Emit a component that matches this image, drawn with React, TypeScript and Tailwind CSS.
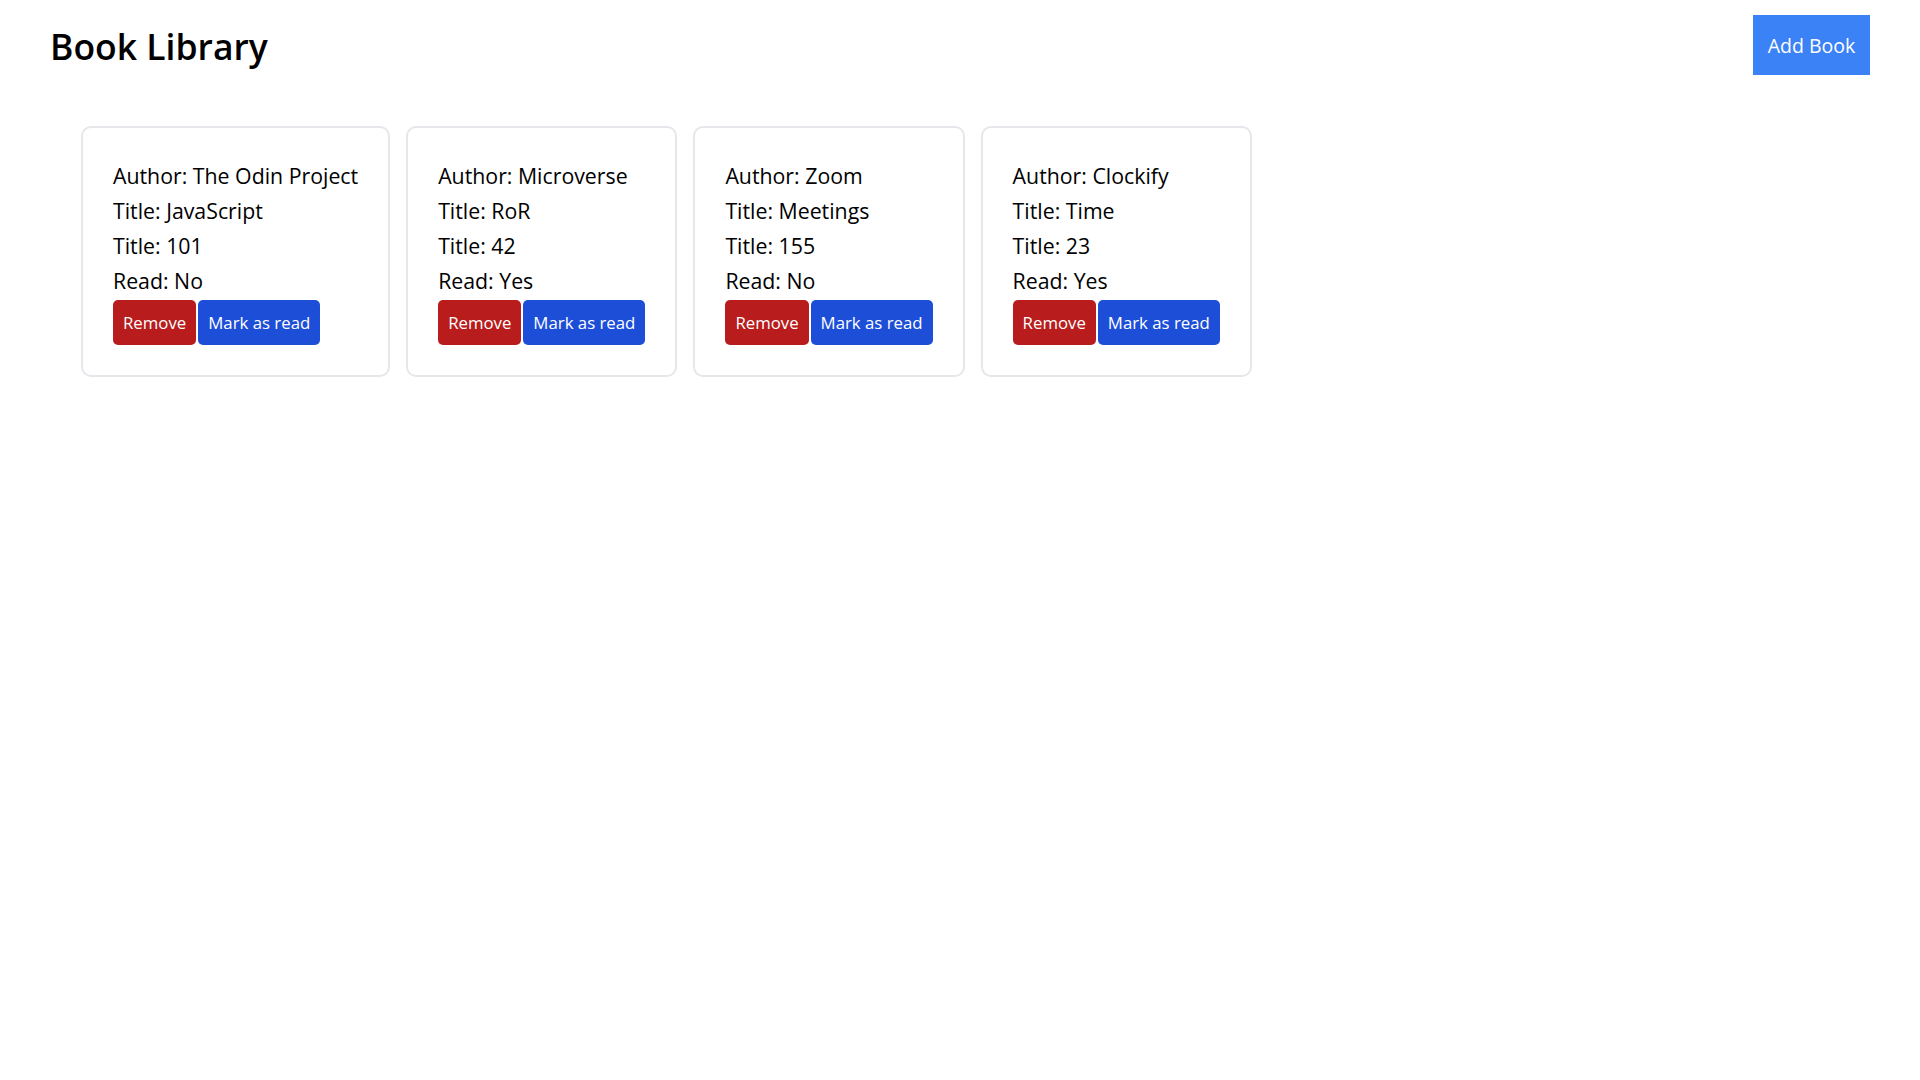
import React from "react";

type Book = { author: string; title: string; pages: string; read: boolean };

const books: Book[] = [
  { author: "The Odin Project", title: "JavaScript", pages: "101", read: false },
  { author: "Microverse", title: "RoR", pages: "42", read: true },
  { author: "Zoom", title: "Meetings", pages: "155", read: false },
  { author: "Clockify", title: "Time", pages: "23", read: true },
];

function BookCard({ book }: { book: Book }) {
  return (
    <div className="border-2 border-[#e5e7eb] rounded-[10px] px-[30px] py-[30px] bg-white">
      <p className="text-[21.3px] leading-[35px] text-black whitespace-nowrap">Author: {book.author}</p>
      <p className="text-[21.3px] leading-[35px] text-black whitespace-nowrap">Title: {book.title}</p>
      <p className="text-[21.3px] leading-[35px] text-black whitespace-nowrap">Title: {book.pages}</p>
      <p className="text-[21.3px] leading-[35px] text-black whitespace-nowrap">Read: {book.read ? "Yes" : "No"}</p>
      <div className="flex gap-[2px] mt-[2px]">
        <button className="h-[45px] px-[10px] rounded-[5px] bg-[#b91c1c] text-white text-[16.8px] leading-[30px] whitespace-nowrap">
          Remove
        </button>
        <button className="h-[45px] px-[10px] rounded-[5px] bg-[#1d4ed8] text-white text-[16.8px] leading-[30px] whitespace-nowrap">
          Mark as read
        </button>
      </div>
    </div>
  );
}

export default function App() {
  return (
    <div
      className="min-h-screen bg-white text-black"
      style={{ fontFamily: '"Open Sans", "Noto Sans", sans-serif' }}
    >
      <header className="flex items-center justify-between pl-[50px] pr-[50px] py-[15px]">
        <h1 className="text-[35.5px] leading-[45px] font-semibold mt-[3px]">Book Library</h1>
        <button className="h-[60px] w-[117px] bg-[#3b82f6] text-white text-[19.5px] leading-[35px]">
          Add Book
        </button>
      </header>
      <main className="flex items-start gap-[16px] px-[81px] mt-[36px]">
        {books.map((b) => (
          <BookCard key={b.author} book={b} />
        ))}
      </main>
    </div>
  );
}
